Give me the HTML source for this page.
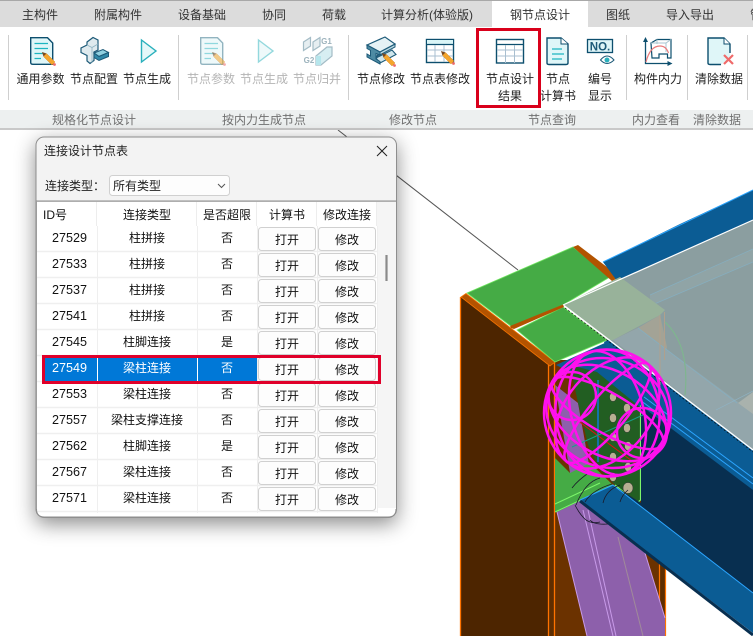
<!DOCTYPE html>
<html><head><meta charset="utf-8">
<style>
html,body{margin:0;padding:0;background:#fff;width:753px;height:636px;overflow:hidden}
svg{display:block}
text{font-family:"Liberation Sans","Noto Sans CJK SC",sans-serif;font-size:12px;fill:#222;text-anchor:middle}
.t{fill:#333}
.d{fill:#b4b4b4}
.g{fill:#707070}
.l{text-anchor:start}
.btn{fill:#fdfdfd;stroke:#d0d0d0}
.b{font-size:12px;fill:#111}
.r text{fill:#111}
.n{font-size:12.6px}
</style></head><body>
<svg width="753" height="636" viewBox="0 0 753 636" xmlns="http://www.w3.org/2000/svg">
<defs>
<filter id="sh" x="-15%" y="-15%" width="130%" height="130%"><feDropShadow dx="0" dy="6" stdDeviation="10" flood-color="#000" flood-opacity=".45"/></filter>
<g id="pen"><path d="M0 0l1.500 4.500 3-3z" fill="#7a4a20"/><path d="M1.500 4.500l3-3 8.500 8.500-3 3z" fill="#f4a52c" stroke="#c9761a" stroke-width=".4"/><circle cx="12.500" cy="12.500" r="1.400" fill="#ef6a6a"/></g>
</defs>
<rect width="753" height="636" fill="#fff"/>

<!-- background line -->
<path d="M338 130L518 270" stroke="#555" stroke-width="1"/>

<!-- 3D SCENE -->
<rect x="554" y="360" width="111" height="276" fill="#6b3200"/>
<rect x="660" y="555" width="5" height="81" fill="#5e2d00"/>
<path d="M665.500 560V636M659.500 555V636" stroke="#ff7300" stroke-width="1.200"/>
<path d="M461 297L550 365V636H461Z" fill="#4d2500"/>
<rect x="548" y="363" width="6.500" height="273" fill="#5e2d00"/>
<path d="M460.500 297V636M548.500 365V636M554.500 362V636" stroke="#ff7300" stroke-width="1.300"/>
<path d="M461 297L466 293.500L555 362L550 366Z" fill="#b35300" stroke="#f47300" stroke-width=".8"/>
<!-- green caps -->
<path d="M467 293L573 247L610 277L563 305L512 327Z" fill="#45ab45" stroke="#6fe65f" stroke-width=".8"/>
<path d="M517 330L563 307L607 340L555 362Z" fill="#45ab45" stroke="#6fe65f" stroke-width=".8"/>
<path d="M510 326L563 304.500L564 307L514 329L511 328Z" fill="#b35300"/>
<path d="M573 247L578 245L620 277L612 281Z" fill="#b35300"/>
<!-- upper blue beam -->
<path d="M603 262L680 224L753 190V225L620 285Z" fill="#0b5c94"/>
<path d="M603 262L753 190" stroke="#2ba5ff" stroke-width="1"/>
<!-- blue behind plate -->
<path d="M556 365L607 342L660 385L640 420L597 385L570 372Z" fill="#0b5c94"/>
<!-- purple brace -->
<path d="M555 385L578 403L590 470L613 485L645 553L665 618V636H587L557 512L570 473Z" fill="#8d60ab"/>
<path d="M557 512L587 636M583 510L613 636M588 510L616 636M645 553L665 618" stroke="#c79ae8" stroke-width="1"/>
<path d="M618 537L643 636" stroke="#a08a9a" stroke-width="1"/>
<!-- green plate -->
<path d="M555 458L570 473L590 463L613 485L557 512L555 512Z" fill="#45ab45"/>
<path d="M555 512L613 485M555 504L600 483" stroke="#7cf56a" stroke-width="1"/>
<path d="M570 365L597 372L640 407V503L615 485L600 470L588 445L578 403Z" fill="#225e22"/>
<path d="M640.500 405V500L637 503L615 485" fill="none" stroke="#7cf56a" stroke-width="1.200"/>
<!-- right beam -->
<path d="M641 405L753 488V593L613 485L641 503Z" fill="#082f50"/>
<path d="M604 342L618 335L753 448V490L640 405L615 380Z" fill="#0b5c94"/>
<path d="M640 400L753 484M644 397L753 478" stroke="#2ba5ff" stroke-width="1"/>
<!-- bottom flange -->
<path d="M580 500L613 485L753 593V633Z" fill="#0b5c94"/>
<path d="M580 501L753 635" stroke="#082f50" stroke-width="3"/>
<path d="M580 500L613 485L753 593" fill="none" stroke="#2ba5ff" stroke-width="1"/>
<!-- bolts -->
<g fill="#b8b092" stroke="#333" stroke-width=".5">
<ellipse cx="613" cy="397" rx="3.500" ry="4.500"/><ellipse cx="627" cy="408" rx="3.500" ry="4.500"/>
<ellipse cx="613" cy="418" rx="3.500" ry="4.500"/><ellipse cx="627" cy="428" rx="3.500" ry="4.500"/>
<ellipse cx="613" cy="437" rx="3.500" ry="4.500"/><ellipse cx="628" cy="446" rx="3.500" ry="4.500"/>
<ellipse cx="613" cy="457" rx="3.500" ry="4.500"/><ellipse cx="628" cy="467" rx="3.500" ry="4.500"/>
<ellipse cx="613" cy="477" rx="3.500" ry="4.500"/><ellipse cx="628" cy="488" rx="5" ry="5.500"/>
</g>
<!-- weld scribbles -->
<g fill="none" stroke="#1a1a2a" stroke-width=".8">
<path d="M572 488Q578 480 590 472M576 505Q585 482 600 478M585 502Q592 490 612 484M575 505Q580 515 586 520Q592 524 600 522M590 520Q594 525 608 524"/>
<path d="M603 503Q606 490 620 485M620 502Q622 495 628 490"/>
</g>
<!-- slab -->
<path d="M563 305L753 220V450L563 305Z" fill="#8b9ea0"/>
<path d="M650 295L753 249V262L652 305L650 298Z" fill="#90a4a6"/>
<path d="M652 305L753 262M650 295L753 249" stroke="#86aebf" stroke-width=".7"/>
<path d="M613 340L638 328L660 315L667 347L662 382L640 358Z" fill="#a3a396"/>
<path d="M563 305L620 277L665 310L660 315L613 340L607 340Z" fill="#98b29a"/>
<path d="M613 340L638 328L753 413V450Z" fill="#93a6ab"/>
<path d="M638 328L737 403" stroke="#86aebf" stroke-width=".8"/>
<path d="M660 315V385M664.500 312V360" stroke="#b0a08c" stroke-width="1"/>
<path d="M665 322Q690 345 685 395" fill="none" stroke="#7fb58f" stroke-width="1.200"/>
<path d="M716 410L753 391" stroke="#8fb4c6" stroke-width=".7"/>
<path d="M738 403L753 392V414Z" fill="#a9b2ad"/>
<path d="M563 305L753 220" stroke="#fff" stroke-width="1.200"/>
<path d="M564 305.500L753 450" stroke="#fff" stroke-width="1.400"/>
<path d="M565 308L753 452" stroke="#0a0a0a" stroke-width=".7" stroke-dasharray="2 2"/>
<!-- axis lines -->
<path d="M598 380V462" stroke="#0a84ff" stroke-width="1.200"/>
<path d="M577 420L640 467" stroke="#e01010" stroke-width="1"/>
<path d="M572 447L643 415" stroke="#18a088" stroke-width="1"/>
<!-- sphere -->
<g fill="none" stroke="#ff10ee" stroke-width="2.500">
<circle cx="607.500" cy="413" r="63.500"/>
<ellipse cx="607.500" cy="413" rx="63.500" ry="42" transform="rotate(30 607.500 413)"/>
<ellipse cx="607.500" cy="413" rx="63.500" ry="20" transform="rotate(30 607.500 413)"/>
<ellipse cx="607.500" cy="413" rx="63.500" ry="42" transform="rotate(-50 607.500 413)"/>
<ellipse cx="607.500" cy="413" rx="63.500" ry="18" transform="rotate(-50 607.500 413)"/>
<ellipse cx="607.500" cy="413" rx="63.500" ry="52" transform="rotate(85 607.500 413)"/>
<ellipse cx="607.500" cy="413" rx="63.500" ry="36" transform="rotate(75 607.500 413)"/>
<ellipse cx="607.500" cy="413" rx="62" ry="54" transform="rotate(20 607.500 413)"/>
<circle cx="572" cy="396" r="24"/>
<circle cx="642" cy="433" r="25"/>
</g>

<!-- RIBBON -->
<rect x="0" y="0" width="753" height="27" fill="#dcdcdc"/>
<rect x="0" y="0" width="753" height="1" fill="#a8a8a8"/>
<rect x="492" y="1" width="96" height="26" fill="#fff"/>
<rect x="0" y="27" width="753" height="83" fill="#fff"/>
<rect x="0" y="110" width="753" height="18" fill="#edf0f0"/>
<rect x="0" y="128" width="753" height="2" fill="#c9c9c9"/>
<text x="40" y="19" class="t">主构件</text><text x="118" y="19" class="t">附属构件</text><text x="202" y="19" class="t">设备基础</text><text x="274" y="19" class="t">协同</text><text x="334" y="19" class="t">荷载</text><text x="427" y="19" class="t">计算分析(体验版)</text><text x="540" y="19" class="t">钢节点设计</text><text x="618" y="19" class="t">图纸</text><text x="690" y="19" class="t">导入导出</text><text x="756" y="19" class="t">管</text>
<path d="M8.500 35V100M178.500 35V100M348.500 35V100M626.500 35V100M687.500 35V100M747.500 35V100" stroke="#cfcfcf" stroke-width="1"/>

<text x="40.500" y="83">通用参数</text><text x="94" y="83">节点配置</text><text x="147" y="83">节点生成</text>
<text x="211" y="83" class="d">节点参数</text><text x="264" y="83" class="d">节点生成</text><text x="317" y="83" class="d">节点归并</text>
<text x="381" y="83">节点修改</text><text x="440" y="83">节点表修改</text>
<text x="510" y="83">节点设计</text><text x="510" y="100">结果</text>
<text x="558" y="83">节点</text><text x="558" y="100">计算书</text>
<text x="600" y="83">编号</text><text x="600" y="100">显示</text>
<text x="658" y="83">构件内力</text><text x="719" y="83">清除数据</text>
<text x="94" y="124" class="g">规格化节点设计</text><text x="264" y="124" class="g">按内力生成节点</text><text x="413" y="124" class="g">修改节点</text><text x="552" y="124" class="g">节点查询</text><text x="656" y="124" class="g">内力查看</text><text x="717" y="124" class="g">清除数据</text>

<!-- Icons -->
<path d="M30.700 37.700H47.500L52.700 43V64.300H33Q30.700 64.300 30.700 62.500Z" fill="#dff6f8" stroke="#0d4f6e" stroke-width="1.400"/>
<path d="M34.500 43.500H48M34.500 48.500H48M34.500 53.500H44M34.500 58.500H41" stroke="#1cb5c0" stroke-width="1.200"/>
<use href="#pen" x="42" y="52"/>
<!-- node config -->
<path d="M87 42L93 37.500L98 40V50L94 52V60.500L90 63.500L87 61V55.500L81 52.500V48L87 45Z" fill="#dfeaee" stroke="#1d5a78" stroke-width="1.200"/>
<path d="M87 45L92 47.500L98 44M92 47.500V63" fill="none" stroke="#8fb4c2" stroke-width=".8"/>
<path d="M94 53L103 49.500L108.500 52.500L99 56.500Z" fill="#8fd0e0" stroke="#1d5a78" stroke-width="1"/>
<path d="M94 53V57.500L99 60.500L108.500 56.500V52.500L99 56.500Z" fill="#2f88a8" stroke="#1d5a78" stroke-width="1"/>
<path d="M141.500 40L156 51L141.500 62Z" fill="#e4f8f9" stroke="#2ab0bc" stroke-width="1.400"/>
<!-- disabled doc -->
<path d="M200.700 37.700H217.500L222.700 43V64.300H203Q200.700 64.300 200.700 62.500Z" fill="#eef9fa" stroke="#92b4c0" stroke-width="1.400"/>
<path d="M204.500 43.500H218M204.500 48.500H218M204.500 53.500H214M204.500 58.500H211" stroke="#8fd8de" stroke-width="1.200"/>
<g opacity=".55"><use href="#pen" x="212" y="52"/></g>
<path d="M258.500 40L273 51L258.500 62Z" fill="#eef9fa" stroke="#93d8dd" stroke-width="1.400"/>
<!-- merge -->
<path d="M303.500 42L310.500 37.500V46L303.500 50.500ZM313 42L320 37.500V46L313 50.500Z" fill="#e6eef1" stroke="#a4bcc6" stroke-width="1.200"/>
<path d="M316 56L327 47H332V56L321 65H316Z" fill="#d7eef2" stroke="#a4bcc6" stroke-width="1.200"/>
<path d="M316 56H321V65H316Z" fill="#b6e6ec"/>
<text x="326.500" y="44" style="font-size:8px;font-weight:bold;fill:#9db3bd">G1</text>
<text x="309" y="63" style="font-size:8px;font-weight:bold;fill:#9db3bd">G2</text>
<!-- I beam -->
<path d="M376 58L392 50L396 54.500L380 63Z" fill="#cfe6ec" stroke="#1d5a78" stroke-width="1.100"/>
<path d="M380 52L395 44V47L376 57Z" fill="#bcdbe4" stroke="#1d5a78" stroke-width="1"/>
<path d="M367 45L385 37L395 44L380 52Z" fill="#e6f2f5" stroke="#1d5a78" stroke-width="1.200"/>
<path d="M367 45L380 52V55L376 53.500V59L380 61.500V64L367 57V54L370.500 56V50.500L367 48.500Z" fill="#4d8ba3" stroke="#1d5a78" stroke-width="1"/>
<use href="#pen" x="382" y="53"/>
<!-- table pen -->
<rect x="426.500" y="39.500" width="27" height="23" fill="#fff" stroke="#0d4f6e" stroke-width="1.400"/>
<rect x="427" y="40" width="26" height="4" fill="#d9f5f7"/>
<path d="M426.500 44.500H453.500" stroke="#0d4f6e" stroke-width="1.200"/>
<path d="M427 50H453M427 56H453M435 45V62M444 45V62" stroke="#a9bfd0" stroke-width="1"/>
<use href="#pen" x="441" y="51"/>
<!-- design table -->
<rect x="496.500" y="39.500" width="27" height="23.500" fill="#fff" stroke="#0d4f6e" stroke-width="1.400"/>
<path d="M496.500 44.500H523.500" stroke="#0d4f6e" stroke-width="1.200"/>
<path d="M497 50H523M497 56H523M505.500 45V63M514.500 45V63" stroke="#a9bfd0" stroke-width="1"/>
<!-- calc doc -->
<path d="M547 38H561L568 44V63Q568 64.500 566 64.500H549Q547 64.500 547 63Z" fill="#dff6f8" stroke="#0d4f6e" stroke-width="1.400"/>
<path d="M561 38V44H568" fill="#fff" stroke="#0d4f6e" stroke-width="1"/>
<path d="M552 49H562M552 54H564M552 59H562" stroke="#1cb5c0" stroke-width="1.200"/>
<!-- NO. -->
<rect x="587.500" y="39.500" width="25" height="13" fill="#dff6f8" stroke="#0d4f6e" stroke-width="1.300"/>
<text x="600" y="50.500" style="font-size:11.500px;font-weight:bold;fill:#1d5a78">NO.</text>
<path d="M600.500 60Q607 52 614 60Q607 67 600.500 60Z" fill="#fff" stroke="#1d5a78" stroke-width="1"/>
<circle cx="607" cy="60" r="2.500" fill="#2ab0bc"/>
<!-- force -->
<path d="M645.500 40V63.500H670" fill="none" stroke="#0d4f6e" stroke-width="1.300"/>
<path d="M645.500 37L643 42H648ZM672.500 63.500L667.500 61V66Z" fill="#0d4f6e"/>
<path d="M651 43L657 39.500H671V58H667.500V54H659V58H652Z" fill="#fff" stroke="#0d4f6e" stroke-width="1.200"/>
<path d="M651 43H666L671 39.500M666 43V52M657 39.500V44" fill="none" stroke="#a9c6d0" stroke-width="1"/>
<path d="M646 62Q650 46 660 46Q666 46 668.500 53" fill="none" stroke="#ea7a7a" stroke-width="1.200"/>
<!-- clear -->
<path d="M708 38H724L730 44V58L721 64.500H710Q708 64.500 708 63Z" fill="#dff6f8" stroke="none"/>
<path d="M730 53V44L724 38H708V63Q708 64.500 710 64.500H721" fill="none" stroke="#0d4f6e" stroke-width="1.400"/>
<path d="M724 38V44H730" fill="#fff" stroke="#0d4f6e" stroke-width="1"/>
<path d="M724 55L733 64M733 55L724 64" stroke="#ef6a6a" stroke-width="2.200"/>

<rect x="477.500" y="29.500" width="62" height="77" fill="none" stroke="#d9001b" stroke-width="3"/>

<!-- DIALOG -->
<rect x="36" y="137" width="360.500" height="380.500" rx="8" fill="#f3f3f3" stroke="#8e8e8e" stroke-width="1" filter="url(#sh)"/>
<text x="44" y="155" class="l">连接设计节点表</text>
<path d="M377 146L387 156M387 146L377 156" stroke="#222" stroke-width="1"/>
<text x="45" y="190" class="l">连接类型：</text>
<rect x="109.500" y="175.500" width="120" height="20" rx="3" fill="#fdfdfd" stroke="#d0d0d0"/>
<text x="113" y="190" class="l">所有类型</text>
<path d="M218 184L221.500 187.500L225 184" fill="none" stroke="#555" stroke-width="1"/>
<path d="M36.500 201H396V509Q396 517 388 517H44.500Q36.500 517 36.500 509Z" fill="#fff"/>
<rect x="36" y="200.500" width="360" height="1.200" fill="#8c8c8c"/>
<rect x="36" y="201" width="1" height="310" fill="#9c9c9c"/>
<rect x="377" y="202" width="19" height="306" fill="#f5f5f5"/>
<path d="M386.500 255V281" stroke="#8a8a8a" stroke-width="2.200"/>
<path d="M96.500 202V226M196.500 202V226M256.500 202V226M316.500 202V226M376.500 202V226" stroke="#ededed"/>
<path d="M97.500 226V513M197.500 226V513M257.500 226V513M317.500 226V513M377.500 226V513" stroke="#efefef"/>
<path d="M37 251.500H377M37 277.500H377M37 303.500H377M37 329.500H377M37 355.500H377M37 381.500H377M37 407.500H377M37 433.500H377M37 459.500H377M37 485.500H377M37 511.500H377" stroke="#efefef" stroke-width="1.400"/>
<path d="M44.500 517H388Q396 517 396 509" fill="none" stroke="#8e8e8e"/>
<path d="M36.500 509Q36.500 517 44.500 517" fill="none" stroke="#8e8e8e"/>
<g class="r">
<text x="43" y="219" class="l">ID号</text><text x="147" y="219">连接类型</text><text x="227" y="219">是否超限</text><text x="287" y="219">计算书</text><text x="347" y="219">修改连接</text>
</g>
<rect x="45" y="357" width="212" height="24" fill="#0078d7"/>
<path d="M97.500 357V381M197.500 357V381" stroke="#fff"/>
<g class="r">
<text x="69.500" y="242" class="n">27529</text><text x="147" y="242">柱拼接</text><text x="227" y="242">否</text>
<text x="69.500" y="268" class="n">27533</text><text x="147" y="268">柱拼接</text><text x="227" y="268">否</text>
<text x="69.500" y="294" class="n">27537</text><text x="147" y="294">柱拼接</text><text x="227" y="294">否</text>
<text x="69.500" y="320" class="n">27541</text><text x="147" y="320">柱拼接</text><text x="227" y="320">否</text>
<text x="69.500" y="346" class="n">27545</text><text x="147" y="346">柱脚连接</text><text x="227" y="346">是</text>
<text x="69.500" y="398" class="n">27553</text><text x="147" y="398">梁柱连接</text><text x="227" y="398">否</text>
<text x="69.500" y="424" class="n">27557</text><text x="147" y="424">梁柱支撑连接</text><text x="227" y="424">否</text>
<text x="69.500" y="450" class="n">27562</text><text x="147" y="450">柱脚连接</text><text x="227" y="450">是</text>
<text x="69.500" y="476" class="n">27567</text><text x="147" y="476">梁柱连接</text><text x="227" y="476">否</text>
<text x="69.500" y="502" class="n">27571</text><text x="147" y="502">梁柱连接</text><text x="227" y="502">否</text>
</g>
<text x="69.500" y="372" class="n" style="fill:#fff">27549</text><text x="147" y="372" style="fill:#fff">梁柱连接</text><text x="227" y="372" style="fill:#fff">否</text>
<g>
<rect class="btn" x="258.500" y="227.500" width="57" height="23" rx="3"/><rect class="btn" x="318.500" y="227.500" width="57" height="23" rx="3"/>
<rect class="btn" x="258.500" y="253.500" width="57" height="23" rx="3"/><rect class="btn" x="318.500" y="253.500" width="57" height="23" rx="3"/>
<rect class="btn" x="258.500" y="279.500" width="57" height="23" rx="3"/><rect class="btn" x="318.500" y="279.500" width="57" height="23" rx="3"/>
<rect class="btn" x="258.500" y="305.500" width="57" height="23" rx="3"/><rect class="btn" x="318.500" y="305.500" width="57" height="23" rx="3"/>
<rect class="btn" x="258.500" y="331.500" width="57" height="23" rx="3"/><rect class="btn" x="318.500" y="331.500" width="57" height="23" rx="3"/>
<rect class="btn" x="258.500" y="357.500" width="57" height="23" rx="3"/><rect class="btn" x="318.500" y="357.500" width="57" height="23" rx="3"/>
<rect class="btn" x="258.500" y="383.500" width="57" height="23" rx="3"/><rect class="btn" x="318.500" y="383.500" width="57" height="23" rx="3"/>
<rect class="btn" x="258.500" y="409.500" width="57" height="23" rx="3"/><rect class="btn" x="318.500" y="409.500" width="57" height="23" rx="3"/>
<rect class="btn" x="258.500" y="435.500" width="57" height="23" rx="3"/><rect class="btn" x="318.500" y="435.500" width="57" height="23" rx="3"/>
<rect class="btn" x="258.500" y="461.500" width="57" height="23" rx="3"/><rect class="btn" x="318.500" y="461.500" width="57" height="23" rx="3"/>
<rect class="btn" x="258.500" y="487.500" width="57" height="23" rx="3"/><rect class="btn" x="318.500" y="487.500" width="57" height="23" rx="3"/>
</g>
<text x="287" y="244" class="b">打开</text><text x="347" y="244" class="b">修改</text>
<text x="287" y="270" class="b">打开</text><text x="347" y="270" class="b">修改</text>
<text x="287" y="296" class="b">打开</text><text x="347" y="296" class="b">修改</text>
<text x="287" y="322" class="b">打开</text><text x="347" y="322" class="b">修改</text>
<text x="287" y="348" class="b">打开</text><text x="347" y="348" class="b">修改</text>
<text x="287" y="374" class="b">打开</text><text x="347" y="374" class="b">修改</text>
<text x="287" y="400" class="b">打开</text><text x="347" y="400" class="b">修改</text>
<text x="287" y="426" class="b">打开</text><text x="347" y="426" class="b">修改</text>
<text x="287" y="452" class="b">打开</text><text x="347" y="452" class="b">修改</text>
<text x="287" y="478" class="b">打开</text><text x="347" y="478" class="b">修改</text>
<text x="287" y="504" class="b">打开</text><text x="347" y="504" class="b">修改</text>
<rect x="43.500" y="356.500" width="336" height="26" fill="none" stroke="#e0002a" stroke-width="3"/>
</svg>
</body></html>
